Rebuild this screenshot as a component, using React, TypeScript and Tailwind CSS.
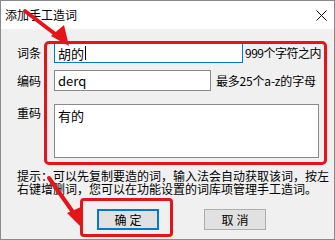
import React from "react";

const font = { fontFamily: '"Noto Sans CJK SC", "Microsoft YaHei", sans-serif' };

export default function App() {
  return (
    <div
      className="relative w-[335px] h-[240px] overflow-hidden bg-[#f0f0f0] border border-[#8a8a8a] text-[12px] text-black"
      style={font}
    >
      {/* title bar */}
      <div className="h-[28px] bg-white flex items-center justify-between pl-[4px] pr-[6px]">
        <span className="text-[12px] leading-none">添加手工造词</span>
        <svg width="11" height="11" viewBox="0 0 11 11" className="mr-[1px]">
          <path d="M0.5 0.5 L10.5 10.5 M10.5 0.5 L0.5 10.5" stroke="#111" strokeWidth="1" />
        </svg>
      </div>

      {/* body */}
      <div className="pl-[16px] pt-[14px] flex flex-col">
        <div className="flex items-center h-[20px]">
          <span className="w-[37px] leading-none">词条</span>
          <div className="w-[189px] h-[20px] bg-white border border-[#0078d7] flex items-center pl-[3px] text-[13px] leading-none">
            胡的
            <span className="inline-block w-px h-[14px] bg-black ml-[1px]" />
          </div>
          <span className="ml-[2px] leading-none tracking-[-0.5px]">999个字符之内</span>
        </div>

        <div className="flex items-center h-[21px] mt-[7px]">
          <span className="w-[37px] leading-none">编码</span>
          <div className="w-[157px] h-[21px] bg-white border border-[#8a8a8a] flex items-center pl-[3px] text-[13px] leading-none">
            derq
          </div>
          <span className="ml-[5px] leading-none tracking-[-0.2px]">最多25个a-z的字母</span>
        </div>

        <div className="flex items-start mt-[13px]">
          <span className="w-[37px] leading-none mt-[3px]">重码</span>
          <div className="w-[265px] h-[54px] bg-white border border-[#8a8a8a] pl-[3px] pt-[4px] text-[13px] leading-none">
            有的
          </div>
        </div>

        <div className="mt-[11px] leading-[13px] whitespace-nowrap">
          <div>提示：可以先复制要造的词，输入法会自动获取该词，按左</div>
          <div>右键增删词，您可以在功能设置的词库项管理手工造词。</div>
        </div>

        <div className="flex mt-[14px] pl-[80px] gap-[45px]">
          <div className="w-[62px] h-[21px] bg-[#e1e1e1] border-2 border-[#0078d7] flex items-center justify-center leading-none tracking-[3px] pl-[3px]">
            确定
          </div>
          <div className="w-[62px] h-[21px] bg-[#e1e1e1] border border-[#adadad] flex items-center justify-center leading-none tracking-[3px] pl-[3px]">
            取消
          </div>
        </div>
      </div>

      {/* annotations */}
      <div className="absolute left-[43px] top-[40px] w-[283px] h-[124px] border-[3px] border-[#e3151b] rounded-[5px] pointer-events-none" />
      <div className="absolute left-[79px] top-[197px] w-[93px] h-[39px] border-[3px] border-[#e3151b] rounded-[4px] pointer-events-none" />
      <svg className="absolute left-0 top-0 pointer-events-none" width="335" height="240" viewBox="0 0 335 240">
        <path d="M24 10 L58 36" stroke="#e3151b" strokeWidth="4" strokeLinecap="round" />
        <polygon points="68,45 50,35 63,24" fill="#e3151b" />
        <path d="M48 177 L74 214" stroke="#e3151b" strokeWidth="4" strokeLinecap="round" />
        <polygon points="80,226 66,212 80,206" fill="#e3151b" />
      </svg>
    </div>
  );
}
